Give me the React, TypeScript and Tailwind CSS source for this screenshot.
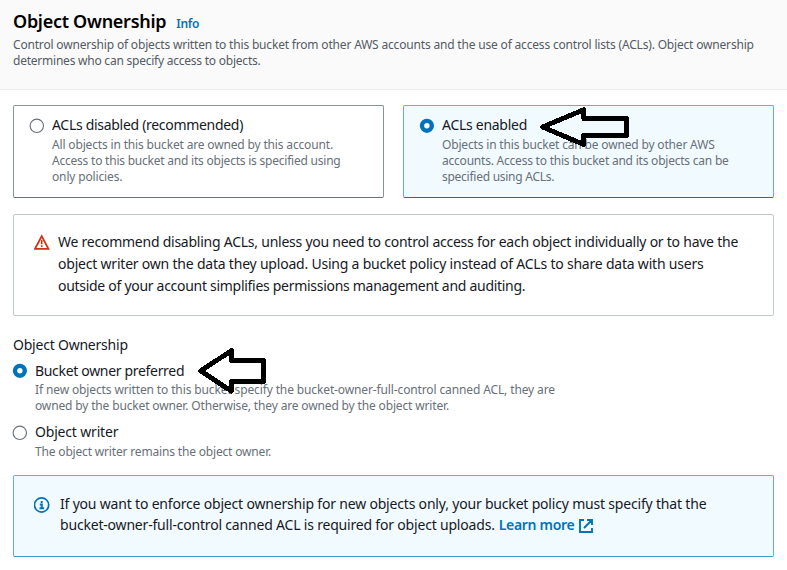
import React from "react";

function Radio({ checked = false }: { checked?: boolean }) {
  return (
    <svg className="-ml-px block h-[16px] w-[16px] shrink-0" viewBox="0 0 16 16" fill="#fff">
      {checked ? (
        <circle cx="7.9" cy="7.8" r="4.9" stroke="#0073bb" strokeWidth="4.4" />
      ) : (
        <circle cx="7.8" cy="7.8" r="6.7" stroke="#687078" strokeWidth="1.1" />
      )}
    </svg>
  );
}

function Line({ className = "", children }: { className?: string; children: React.ReactNode }) {
  return (
    <span className="block whitespace-nowrap">
      <span className={className}>{children}</span>
    </span>
  );
}

function Arrow({ className, points, viewBox }: { className: string; points: string; viewBox: string }) {
  return (
    <svg className={className} viewBox={viewBox} fill="none" stroke="#000" strokeWidth="4.9" strokeLinejoin="round" shapeRendering="crispEdges">
      <polygon points={points} />
    </svg>
  );
}

export default function App() {
  return (
    <main className="relative h-[570px] w-[787px] overflow-hidden bg-white font-['Noto_Sans',sans-serif] text-[#16191f]">
      <header className="h-[90px] border-b border-[#eaeded] bg-[#fafafa] pl-[13px] pt-[9px]">
        <div className="flex h-[24px] items-baseline gap-[10px] whitespace-nowrap leading-[24px]">
          <h2 className="text-[18px] font-semibold tracking-[-0.28px] text-[#000]">Object Ownership</h2>
          <a className="text-[12px] font-semibold tracking-[-0.3px] text-[#0073bb]">Info</a>
        </div>
        <p className="mt-[4px] text-[12px] leading-[16px] text-[#545b64]">
          <Line className="tracking-[-0.18px]">Control ownership of objects written to this bucket from other AWS accounts and the use of access control lists (ACLs). Object ownership</Line>
          <Line className="tracking-[-0.23px]">determines who can specify access to objects.</Line>
        </p>
      </header>

      <div className="flex flex-col px-[13px] pt-[15px]">
        <div className="flex h-[93px] gap-[19px]">
          <section className="flex w-[371px] gap-[7px] rounded-[2px] border border-[#879596] border-b-[#687078] pl-[16px] pt-[9px]">
            <div className="pt-[3px]"><Radio /></div>
            <div>
              <h3 className="text-[14px] leading-[20px]"><Line className="tracking-[-0.3px]">ACLs disabled (recommended)</Line></h3>
              <p className="mt-[2px] text-[12px] leading-[16px] text-[#687078]">
                <Line className="tracking-[-0.16px]">All objects in this bucket are owned by this account.</Line>
                <Line className="tracking-[-0.22px]">Access to this bucket and its objects is specified using</Line>
                <Line className="tracking-[-0.15px]">only policies.</Line>
              </p>
            </div>
          </section>
          <section className="flex w-[371px] gap-[7px] rounded-[2px] border border-[#64aedb] border-b-[#0073bb] bg-[#f1faff] pl-[16px] pt-[9px]">
            <div className="pt-[3px]"><Radio checked /></div>
            <div>
              <h3 className="text-[14px] leading-[20px]"><Line className="tracking-[-0.28px]">ACLs enabled</Line></h3>
              <p className="mt-[2px] text-[12px] leading-[16px] text-[#687078]">
                <Line className="tracking-[-0.17px]">Objects in this bucket can be owned by other AWS</Line>
                <Line className="tracking-[-0.22px]">accounts. Access to this bucket and its objects can be</Line>
                <Line className="tracking-[-0.26px]">specified using ACLs.</Line>
              </p>
            </div>
          </section>
        </div>

        <section className="mt-[16px] flex h-[102px] w-[761px] gap-2 rounded-[2px] border border-[#bfc9ca] pl-[20px] pt-[16px]">
          <svg className="mt-[3px] h-[16px] w-[16px] shrink-0" viewBox="0 0 16 16" fill="none" stroke="#d13212">
            <path d="M7.7 2.2 14.4 14.8H1Z" strokeWidth="1.8" />
            <path d="M7.7 6v4.3M7.7 11.3v1.7" strokeWidth="1.6" />
          </svg>
          <p className="text-[14px] leading-[22px]">
            <Line className="tracking-[-0.244px]">We recommend disabling ACLs, unless you need to control access for each object individually or to have the</Line>
            <Line className="tracking-[-0.21px]">object writer own the data they upload. Using a bucket policy instead of ACLs to share data with users</Line>
            <Line className="tracking-[-0.29px]">outside of your account simplifies permissions management and auditing.</Line>
          </p>
        </section>

        <h3 className="mt-[19px] text-[14px] leading-[20px]"><Line className="tracking-[-0.22px]">Object Ownership</Line></h3>
        <div className="mt-[6px] flex gap-[7px]">
          <div className="pt-[2px]"><Radio checked /></div>
          <div>
            <h4 className="text-[14px] leading-[20px]"><Line className="tracking-[-0.32px]">Bucket owner preferred</Line></h4>
            <p className="mt-px text-[12px] leading-[16px] text-[#687078]">
              <Line className="tracking-[-0.126px]">If new objects written to this bucket specify the bucket-owner-full-control canned ACL, they are</Line>
              <Line className="tracking-[-0.15px]">owned by the bucket owner. Otherwise, they are owned by the object writer.</Line>
            </p>
          </div>
        </div>
        <div className="mt-[8px] flex gap-[7px]">
          <div className="pt-[3px]"><Radio /></div>
          <div>
            <h4 className="text-[14px] leading-[20px]"><Line className="tracking-[-0.18px]">Object writer</Line></h4>
            <p className="mt-[2px] text-[12px] leading-[16px] text-[#687078]">
              <Line className="tracking-[-0.17px]">The object writer remains the object owner.</Line>
            </p>
          </div>
        </div>

        <section className="mt-[15px] flex h-[82px] w-[761px] gap-[10px] rounded-[2px] border border-[#64aedb] border-b-[#3f96cd] bg-[#f1faff] pl-[20px] pt-[17px]">
          <svg className="mt-[4px] h-[16px] w-[16px] shrink-0" viewBox="0 0 16 16" fill="none" stroke="#0073bb">
            <circle cx="7.6" cy="8" r="7.1" strokeWidth="1.7" />
            <path d="M7.7 3.9v2M5.8 7.5h2v4M5.5 11.3h4.6" strokeWidth="1.9" />
          </svg>
          <p className="text-[14px] leading-[21px]">
            <Line className="tracking-[-0.188px]">If you want to enforce object ownership for new objects only, your bucket policy must specify that the</Line>
            <span className="flex items-center whitespace-nowrap">
              <span className="tracking-[-0.19px]">bucket-owner-full-control canned ACL is required for object uploads.</span>
              <a className="ml-1 font-semibold tracking-[-0.3px] text-[#0073bb]">Learn more</a>
              <svg className="ml-[5px] mt-[2px] h-[14px] w-[14px]" viewBox="0 0 14 14" fill="none" stroke="#0073bb" strokeWidth="1.9">
                <path d="M5 1H1v12h12V9M8 1h5v5M13 1 5 9" />
              </svg>
            </span>
          </p>
        </section>
      </div>

      <Arrow className="absolute left-[538px] top-[104px] h-[46px] w-[94px]" viewBox="538 104 94 46" points="542.6,127 583.8,109.7 583.8,118.5 626.5,118.5 626.5,135.5 583.8,135.5 583.8,144.5" />
      <Arrow className="absolute left-[196px] top-[345px] h-[52px] w-[74px]" viewBox="196 345 74 52" points="200.6,370.8 231.5,350.7 231.5,360.5 263.5,360.5 263.5,381.5 231.5,381.5 231.5,391.2" />
    </main>
  );
}
